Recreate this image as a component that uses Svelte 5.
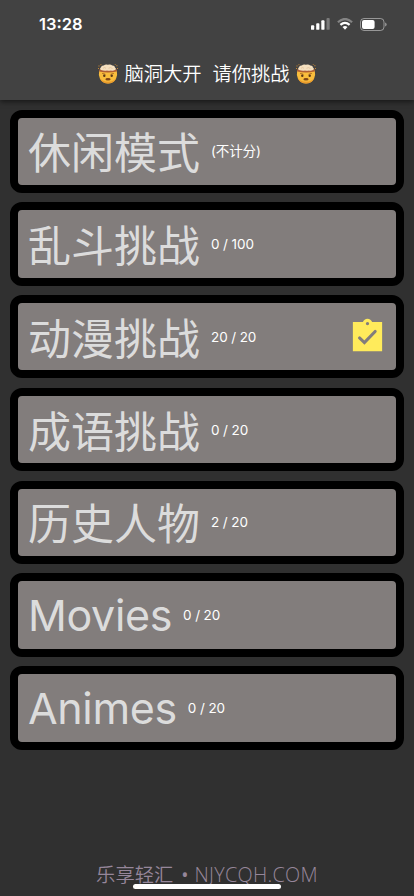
<script lang="ts">
	type Mode = { title: string; note: string; latin?: boolean; done?: boolean };

	const modes: Mode[] = [
		{ title: "休闲模式", note: "(不计分)" },
		{ title: "乱斗挑战", note: "0 / 100" },
		{ title: "动漫挑战", note: "20 / 20", done: true },
		{ title: "成语挑战", note: "0 / 20" },
		{ title: "历史人物", note: "2 / 20" },
		{ title: "Movies", note: "0 / 20", latin: true },
		{ title: "Animes", note: "0 / 20", latin: true },
	];
</script>

{#snippet mindBlown()}
	<svg class="emoji" viewBox="0 0 20 20" aria-hidden="true">
		<path d="M1.2 6.5Q10 8 18.8 6.5Q19.8 11 18 14.7Q15.5 19.5 10 19.5T2 14.7Q.2 11 1.2 6.5Z" fill="#f9bd3c" />
		<path d="M1.3 13Q3.5 17.8 10 17.8T18.7 13Q16.5 19.5 10 19.5T1.3 13Z" fill="#ea9a2c" />
		<path d="M1.2 5.6Q10 3 18.8 5.6L18.8 7.4Q10 9.6 1.2 7.4Z" fill="#b05f35" />
		<path
			d="M3 6Q1.2 4.7 3 3.3Q3.4 1.3 5.8 1.6Q7.2 .2 9.8 .8Q12.6 -.1 14.2 1.5Q16.7 1.3 17 3.4Q18.8 4.7 17 6Q14.8 7 13 6.4Q11 7.2 9 6.5Q6.5 7.2 3 6Z"
			fill="#f5e0bf"
		/>
		<path d="M5 4.3Q6.5 2.8 8 4.3M10.5 4.3Q12.5 2.8 14.5 4.5" fill="none" stroke="#dbb78e" stroke-width=".6" />
		<path d="M4.2 9.4L7.4 10.3M12.6 10.3L15.8 9.4" stroke="#a8641f" stroke-width=".9" />
		<circle cx="6.3" cy="11.7" r="1.2" fill="#593719" />
		<circle cx="13.7" cy="11.7" r="1.2" fill="#593719" />
		<ellipse cx="10" cy="15.3" rx="2.6" ry="1.3" fill="#7d4518" />
		<path d="M.5 1.5h1v1h-1zM2.5 .3h.9v.9h-.9zM18.4 1.2h1v1h-1zM0 4h.9v.9H0zM19 4h.9v.9H19zM16.8 .2h.8v.8h-.8z" fill="#d99131" />
	</svg>
{/snippet}

<div class="screen">
	<header>
		<div class="status">
			<span class="time">13:28</span>
			<div class="status-icons">
				<svg width="19" height="12" viewBox="0 0 19 12" fill="#fff">
					<rect y="7.3" width="3.2" height="4.5" rx=".9" />
					<rect x="5.2" y="5.2" width="3.2" height="6.6" rx=".9" />
					<rect x="10.3" y="2.3" width="3.2" height="9.5" rx=".9" />
					<rect x="15.5" width="3.2" height="11.8" rx=".9" opacity=".3" />
				</svg>
				<svg width="16" height="12" viewBox="0 0 16 12" fill="none" stroke="#fff" stroke-width="2.2">
					<path d="M.9 4.2Q8-2.2 15.1 4.2" opacity=".35" />
					<path d="M3.4 6.9Q8 2.8 12.6 6.9" />
					<path d="M8 11.7L5.5 9.1Q8 7.1 10.5 9.1Z" fill="#fff" stroke="none" />
				</svg>
				<svg width="27" height="13" viewBox="0 0 27 13">
					<rect x=".5" y=".5" width="23.5" height="12" rx="3.5" fill="none" stroke="#fff" opacity=".45" />
					<rect x="2" y="2" width="12.6" height="9" rx="2" fill="#fff" />
					<path d="M25.2 4.5Q26.6 5.2 26.6 6.5T25.2 8.5Z" fill="#fff" opacity=".5" />
				</svg>
			</div>
		</div>
		<h1>
			{@render mindBlown()}
			<span class="left">脑洞大开</span>
			<span class="right">请你挑战</span>
			{@render mindBlown()}
		</h1>
	</header>

	<main>
		{#each modes as mode}
			<button type="button" class="card">
				<span class="title" class:latin={mode.latin}>{mode.title}</span>
				<span class="note">{mode.note}</span>
				{#if mode.done}
					<svg class="done" viewBox="0 0 24 24" aria-label="done">
						<path
							fill="#ffeb5b"
							d="M21 3h-6.18C14.4 1.84 13.3 1 12 1s-2.4.84-2.82 2H3v18h18V3zm-9 0c.55 0 1 .45 1 1s-.45 1-1 1-1-.45-1-1 .45-1 1-1z"
						/>
						<path d="M7.1 12.9L10.1 15.7L16.7 8.9" fill="none" stroke="#827d7c" stroke-width="1.9" stroke-linecap="round" />
					</svg>
				{/if}
			</button>
		{/each}
	</main>

	<footer>
		<span class="mark">乐享轻汇<b>•</b><span class="site">NJYCQH.COM</span></span>
		<div class="home-bar"></div>
	</footer>
</div>

<style>
	:global(body) {
		background: #303030;
	}

	.screen {
		display: flex;
		flex-direction: column;
		height: 896px;
		overflow: hidden;
		background: #303030;
		color: #fff;
		font-family: Inter, "Noto Sans CJK SC", sans-serif;
	}

	header {
		flex: none;
		height: 100px;
		background: #424242;
		box-shadow: 0 2px 5px rgba(0, 0, 0, 0.5);
	}

	.status {
		display: flex;
		align-items: center;
		justify-content: space-between;
		height: 48px;
		padding: 0 27px 0 39px;
	}

	.time {
		font-size: 16.5px;
		font-weight: 600;
	}

	.status-icons {
		display: flex;
		align-items: center;
		gap: 7px;
	}

	.status-icons svg {
		display: block;
	}

	h1 {
		display: flex;
		align-items: center;
		justify-content: center;
		height: 52px;
		margin: 0;
		font-size: 19.3px;
		font-weight: 350;
		line-height: 28px;
		white-space: nowrap;
	}

	.emoji {
		width: 20px;
		height: 20px;
	}

	.left {
		margin: 0 11px 0 6px;
	}

	.right {
		margin-right: 6px;
	}

	main {
		display: flex;
		flex: 1;
		flex-direction: column;
		gap: 9.4px;
		padding: 9.5px 10px 0;
	}

	.card {
		display: flex;
		flex: none;
		align-items: center;
		box-sizing: border-box;
		width: 100%;
		height: 83.4px;
		padding: 0 9px 0 10px;
		border: 8px solid #000;
		border-radius: 12px;
		background: #827d7c;
		color: #fff;
		font-family: inherit;
		text-align: left;
		white-space: nowrap;
	}

	.title {
		padding-top: 4px;
		color: #dcdcdc;
		font-size: 43px;
		line-height: 60px;
	}

	.latin {
		padding-top: 0;
		letter-spacing: -0.35px;
	}

	.note {
		margin-left: 11px;
		font-size: 13.5px;
		font-weight: 380;
		line-height: 20px;
		letter-spacing: -0.1px;
	}

	.done {
		width: 39px;
		height: 39px;
		margin-left: auto;
	}

	footer {
		display: flex;
		flex: none;
		flex-direction: column;
		align-items: center;
		height: 36px;
	}

	.mark {
		color: #96869a;
		font-family: "Noto Sans CJK SC", sans-serif;
		font-size: 19.3px;
		font-weight: 350;
		line-height: 28px;
		white-space: nowrap;
	}

	.mark b {
		margin: 0 6px 0 8px;
		font-family: "Open Sans", sans-serif;
		font-weight: 400;
	}

	.site {
		font-family: "Open Sans", sans-serif;
		font-size: 19.8px;
		font-weight: 330;
		letter-spacing: 0.3px;
	}

	.home-bar {
		z-index: 1;
		width: 148px;
		height: 5px;
		margin-top: -5px;
		border-radius: 3px;
		background: #fff;
	}
</style>
